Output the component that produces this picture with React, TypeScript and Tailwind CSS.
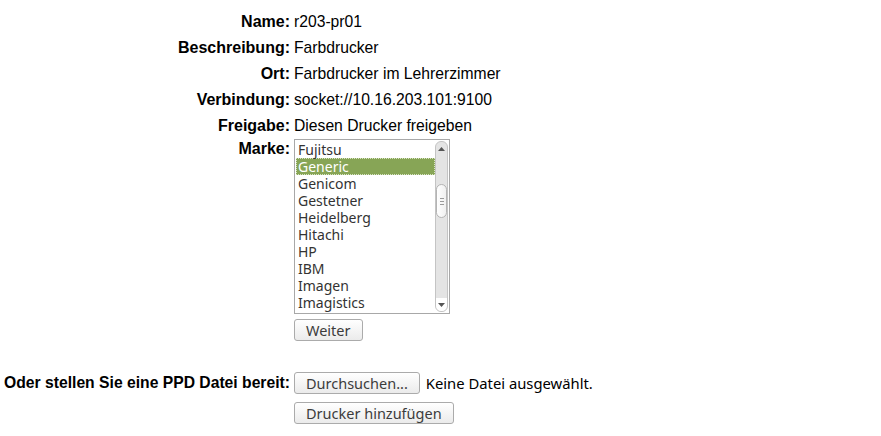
const rows = [
  { label: "Name:", value: "r203-pr01" },
  { label: "Beschreibung:", value: "Farbdrucker" },
  { label: "Ort:", value: "Farbdrucker im Lehrerzimmer" },
  { label: "Verbindung:", value: "socket://10.16.203.101:9100" },
  { label: "Freigabe:", value: "Diesen Drucker freigeben" },
];

const makes = [
  "Fujitsu",
  "Generic",
  "Genicom",
  "Gestetner",
  "Heidelberg",
  "Hitachi",
  "HP",
  "IBM",
  "Imagen",
  "Imagistics",
];

const widget = "font-['Noto_Sans','DejaVu_Sans',sans-serif]";

function Button({ children }: { children: string }) {
  return (
    <button
      className={`${widget} h-[22px] rounded-[3px] border border-[#ababab] bg-gradient-to-b from-white to-[#ebebeb] px-[11px] text-[14.5px] leading-[20px] text-[#3c3c3c]`}
    >
      {children}
    </button>
  );
}

function ScrollBar() {
  return (
    <div className="flex w-[14px] flex-col py-[1px] pr-[1px]">
      <div className="flex h-full flex-col rounded-[6px] border border-[#c4c4c4] bg-[#e4e4e4]">
        <div className="flex h-[13px] items-center justify-center">
          <svg width="7" height="4" viewBox="0 0 7 4">
            <path d="M0 4 L3.5 0 L7 4 Z" fill="#555" />
          </svg>
        </div>
        <div className="mt-[29px] flex h-[34px] flex-col items-center justify-center gap-[2px] rounded-[6px] border border-[#b4b4b4] bg-gradient-to-r from-white to-[#f0f0f0]">
          <div className="h-px w-[4px] bg-[#9a9a9a]" />
          <div className="h-px w-[4px] bg-[#9a9a9a]" />
          <div className="h-px w-[4px] bg-[#9a9a9a]" />
        </div>
        <div className="flex-1" />
        <div className="flex h-[13px] items-center justify-center rounded-b-[6px] bg-white">
          <svg width="7" height="4" viewBox="0 0 7 4">
            <path d="M0 0 L3.5 4 L7 0 Z" fill="#555" />
          </svg>
        </div>
      </div>
    </div>
  );
}

export default function App() {
  return (
    <div className="h-[436px] w-[881px] bg-white pt-[9px] font-['Liberation_Sans',Arial,sans-serif] text-[16px] text-black">
      <div className="grid grid-cols-[290px_1fr] gap-x-1">
        {rows.map((r) => (
          <div key={r.label} className="contents">
            <div className="h-[26px] text-right font-bold leading-[26px]">{r.label}</div>
            <div className="h-[26px] text-[15.7px] leading-[26px]">{r.value}</div>
          </div>
        ))}

        <div className="pt-[1px] text-right font-bold leading-[17px]">Marke:</div>
        <div className="flex flex-col items-start">
          <div className="flex h-[175px] w-[156px] border border-[#a8a8a8] bg-white">
            <ul className={`${widget} flex-1 py-[1px] pl-[1px] text-[14px] leading-[17px] text-[#333]`}>
              {makes.map((m) => (
                <li
                  key={m}
                  className={
                    m === "Generic"
                      ? "h-[17px] border border-dotted border-[#d8e4c4] bg-[#87a556] pl-[1px] leading-[15px] text-white"
                      : "h-[17px] pl-[2px]"
                  }
                >
                  {m}
                </li>
              ))}
            </ul>
            <ScrollBar />
          </div>
          <div className="mt-[5px] flex">
            <Button>Weiter</Button>
          </div>
        </div>

        <div className="mt-[31px] whitespace-nowrap text-right text-[15.7px] font-bold leading-[22px]">
          Oder stellen Sie eine PPD Datei bereit:
        </div>
        <div className="mt-[31px] flex flex-col items-start gap-[8px]">
          <div className="flex h-[22px] items-center gap-[6px]">
            <Button>Durchsuchen...</Button>
            <span className={`${widget} text-[14.8px] leading-[22px]`}>Keine Datei ausgewählt.</span>
          </div>
          <Button>Drucker hinzufügen</Button>
        </div>
      </div>
    </div>
  );
}
